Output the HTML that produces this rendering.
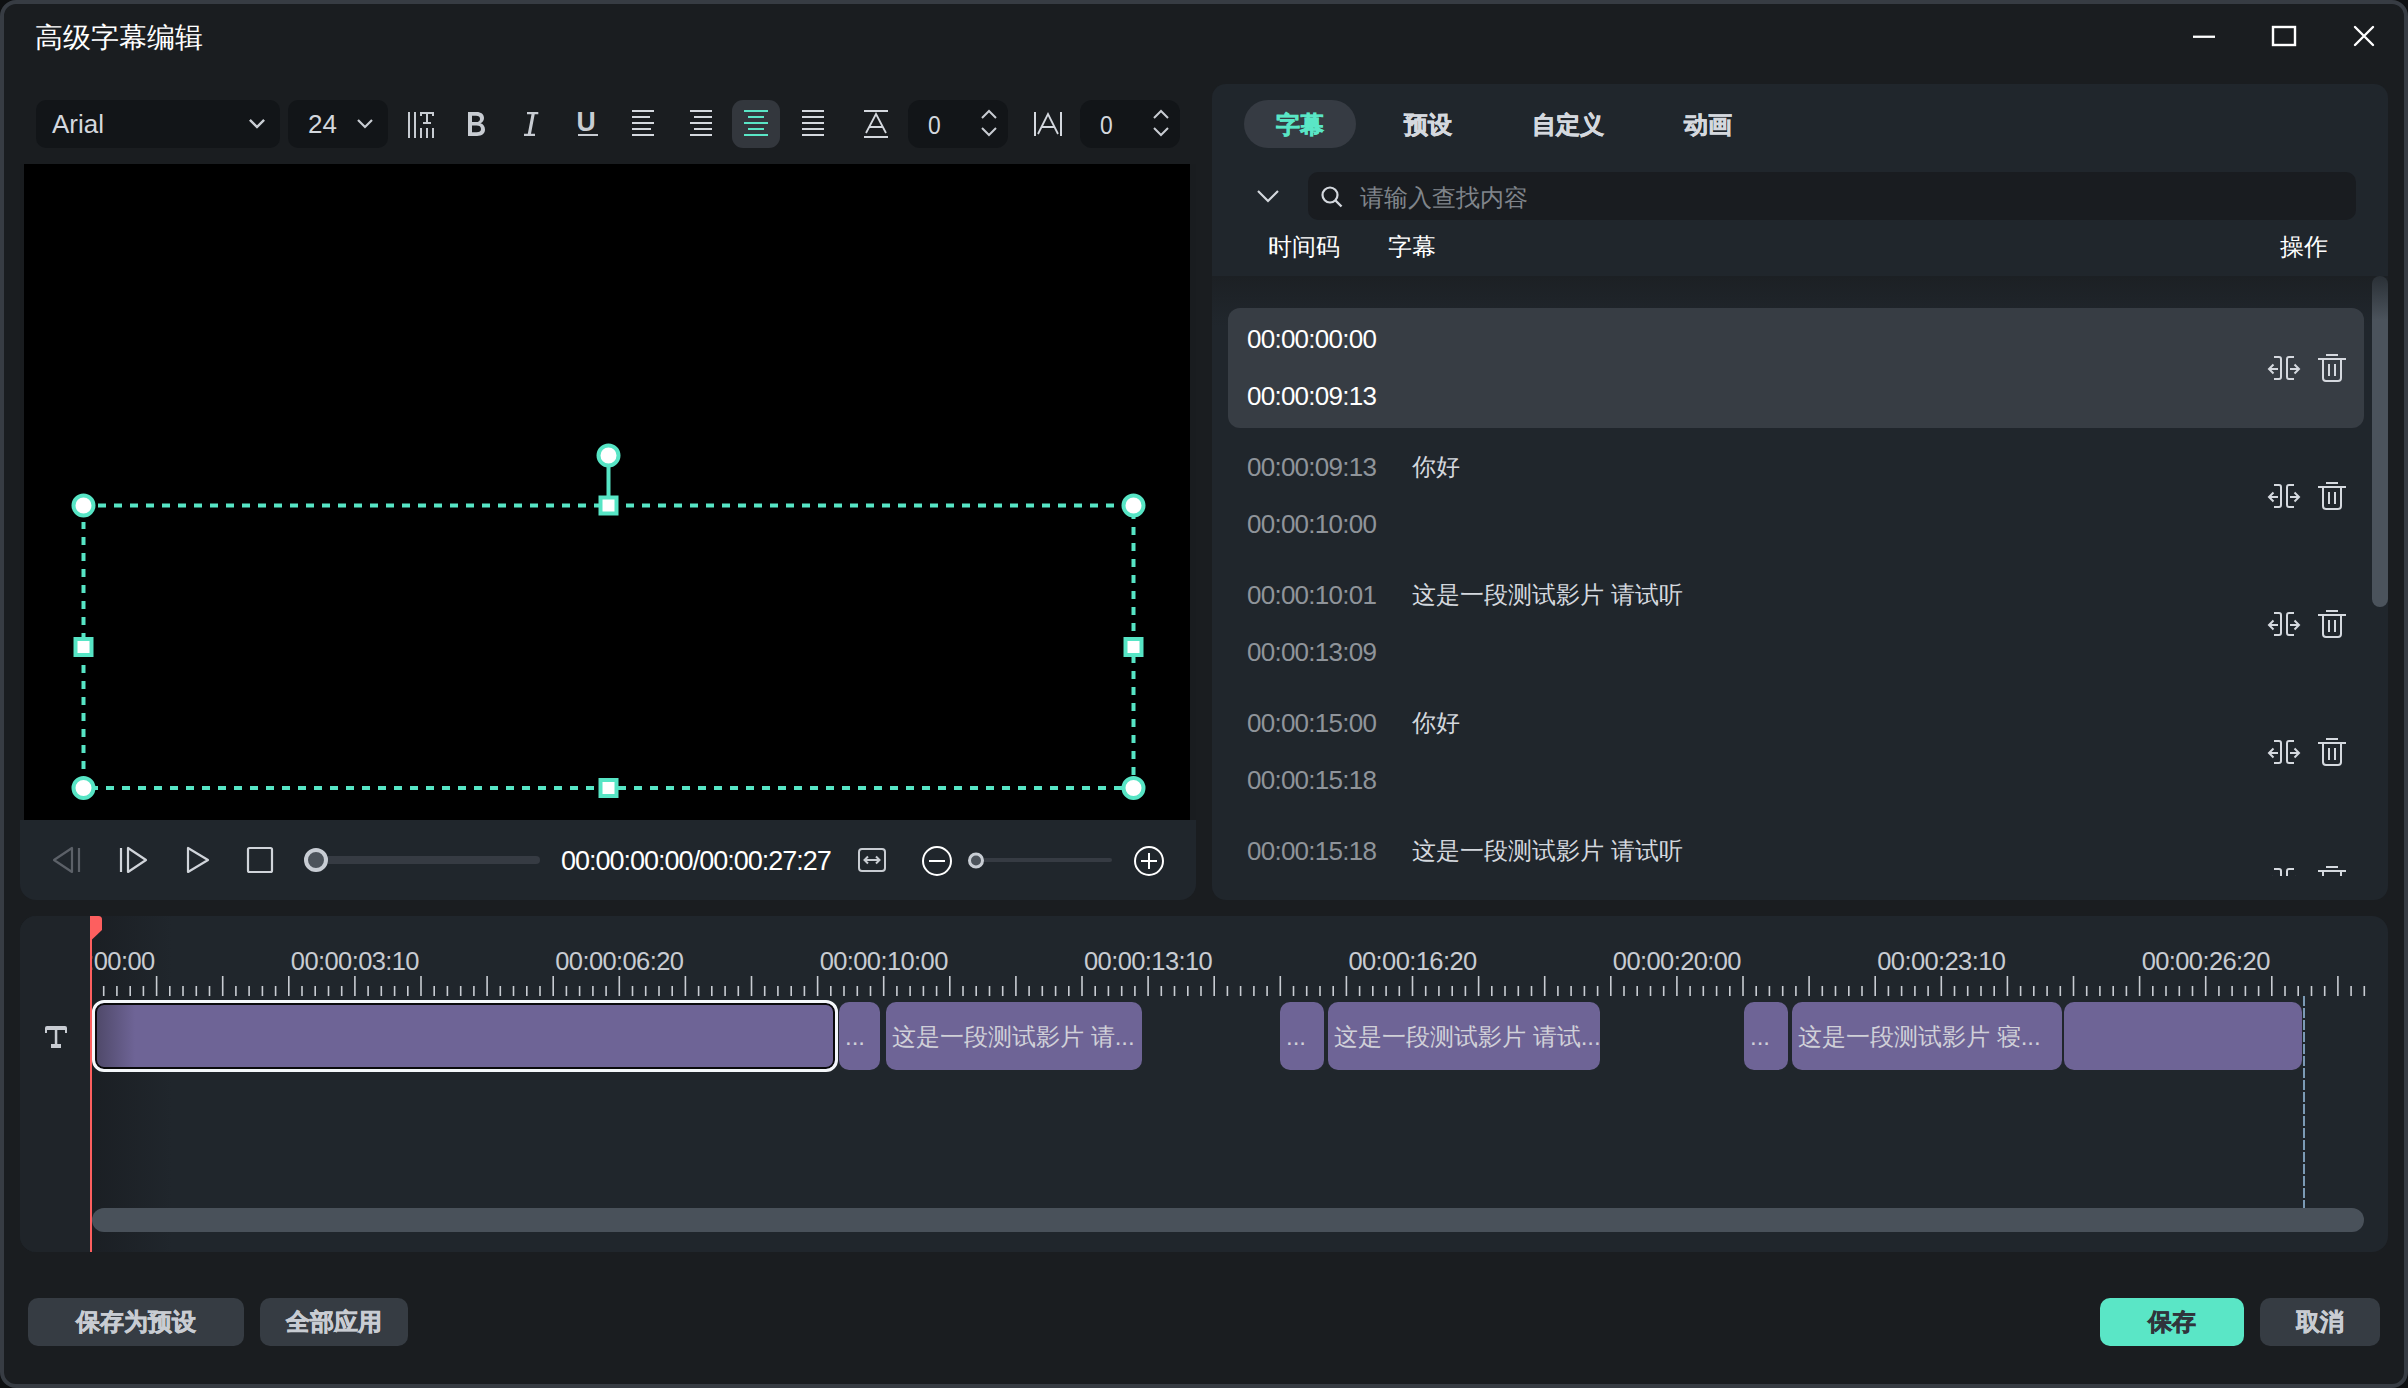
<!DOCTYPE html>
<html><head><meta charset="utf-8">
<style>
*{box-sizing:border-box;margin:0;padding:0}
html,body{width:2408px;height:1388px;overflow:hidden;background:#0e1012;font-family:"Liberation Sans",sans-serif}
.a{position:absolute}
#win{position:absolute;left:0;top:0;width:2408px;height:1388px;border:4px solid #373c43;border-radius:16px;background:#1a1d20;overflow:hidden}
.t{position:absolute;white-space:nowrap;line-height:1}
svg{position:absolute;overflow:visible}
.panel{position:absolute;background:#20262c}
.btn{position:absolute;background:#363c43;border-radius:10px}
.clip{position:absolute;background:#6e6496;border-radius:10px;top:1002px;height:68px;overflow:hidden}
</style></head><body>
<div id="win"></div>
<div id="root" class="a" style="left:0;top:0;width:2408px;height:1388px">

<!-- title -->
<div class="t" style="left:35px;top:24px;font-size:28px;color:#fff">高级字幕编辑</div>

<!-- window controls -->
<svg style="left:0;top:0" width="2408" height="60">
  <rect x="2193" y="35.6" width="22" height="2.3" fill="#fff"/>
  <rect x="2273" y="27" width="22" height="18" fill="none" stroke="#fff" stroke-width="2.4"/>
  <path d="M2355 27 L2373 45 M2373 27 L2355 45" stroke="#fff" stroke-width="2.4" stroke-linecap="round"/>
</svg>


<!-- toolbar -->
<div class="a" style="left:36px;top:100px;width:244px;height:48px;background:#121518;border-radius:10px"></div>
<div class="t" style="left:52px;top:111px;font-size:26px;color:#d4d8de">Arial</div>
<svg style="left:0;top:0" width="1200" height="160">
  <path d="M250 120 L257 127 L264 120" fill="none" stroke="#c8ccd2" stroke-width="2.2"/>
  <path d="M358 120 L365 127 L372 120" fill="none" stroke="#c8ccd2" stroke-width="2.2"/>
</svg>
<div class="a" style="left:288px;top:100px;width:100px;height:48px;background:#121518;border-radius:10px"></div>
<div class="t" style="left:308px;top:111px;font-size:26px;color:#d4d8de">24</div>
<svg style="left:0;top:0" width="1200" height="160">
  <path d="M250 120 L257 127 L264 120" fill="none" stroke="#c8ccd2" stroke-width="2.2"/>
  <path d="M358 120 L365 127 L372 120" fill="none" stroke="#c8ccd2" stroke-width="2.2"/>
  <!-- vertical text icon -->
  <g fill="#c8ccd2">
    <rect x="408" y="112" width="2" height="26"/>
    <rect x="414" y="112" width="2" height="26"/>
    <rect x="420" y="112" width="14" height="2"/>
    <rect x="420" y="112" width="2" height="4"/>
    <rect x="432" y="112" width="2" height="4"/>
    <rect x="426" y="112" width="2" height="12"/>
    <rect x="423" y="122" width="8" height="2"/>
    <rect x="420" y="128" width="2" height="10"/>
    <rect x="426" y="128" width="2" height="10"/>
    <rect x="432" y="128" width="2" height="10"/>
  </g>
  <!-- align left -->
  <g fill="#d4d8de">
    <rect x="632" y="110" width="22" height="2"/><rect x="632" y="116" width="18" height="2"/>
    <rect x="632" y="122" width="22" height="2"/><rect x="632" y="128" width="19" height="2"/>
    <rect x="632" y="134" width="22" height="2"/>
  </g>
  <!-- align right -->
  <g fill="#d4d8de">
    <rect x="690" y="110" width="22" height="2"/><rect x="694" y="116" width="18" height="2"/>
    <rect x="690" y="122" width="22" height="2"/><rect x="694" y="128" width="18" height="2"/>
    <rect x="690" y="134" width="22" height="2"/>
  </g>
  <rect x="732" y="100" width="48" height="48" rx="11" fill="#33373d"/>
  <g fill="#5ae6c6">
    <rect x="744" y="110" width="24" height="2"/><rect x="748" y="116" width="16" height="2"/>
    <rect x="744" y="122" width="24" height="2"/><rect x="748" y="128" width="16" height="2"/>
    <rect x="744" y="134" width="24" height="2"/>
  </g>
  <!-- justify -->
  <g fill="#d4d8de">
    <rect x="802" y="110" width="22" height="2"/><rect x="802" y="116" width="22" height="2"/>
    <rect x="802" y="122" width="22" height="2"/><rect x="802" y="128" width="22" height="2"/>
    <rect x="802" y="134" width="22" height="2"/>
  </g>
  <!-- line spacing -->
  <g fill="#d4d8de">
    <rect x="864" y="110" width="24" height="2"/><rect x="864" y="136" width="24" height="2"/>
  </g>
  <path d="M866 133 L876 114 L886 133 M869.5 127 L882.5 127" fill="none" stroke="#d4d8de" stroke-width="1.8"/>
  <rect x="908" y="100" width="100" height="48" rx="12" fill="#121518"/>
  <path d="M982 118 L989 111 L996 118 M982 128 L989 135 L996 128" fill="none" stroke="#c8ccd2" stroke-width="2"/>
  <!-- |A| -->
  <g fill="#d4d8de"><rect x="1034" y="112" width="2" height="24"/><rect x="1060" y="112" width="2" height="24"/></g>
  <path d="M1038 134 L1048 114 L1058 134 M1041.5 127 L1054.5 127" fill="none" stroke="#d4d8de" stroke-width="1.8"/>
  <rect x="1080" y="100" width="100" height="48" rx="12" fill="#121518"/>
  <path d="M1154 118 L1161 111 L1168 118 M1154 128 L1161 135 L1168 128" fill="none" stroke="#c8ccd2" stroke-width="2"/>
</svg>
<svg style="left:0;top:0" width="700" height="160">
  <path fill="#c8ccd2" fill-rule="evenodd" d="M468 112 H476.5 C481.2 112 484 114.3 484 118 C484 120.6 482.6 122.4 480.4 123.3 C483.2 124 485 126.3 485 129.6 C485 133.6 482 136 477 136 H468 Z M472 115.8 V122 H476 C478.6 122 480 120.9 480 118.9 C480 116.9 478.6 115.8 476 115.8 Z M472 125.6 V132.2 H476.6 C479.4 132.2 481 131 481 128.9 C481 126.8 479.4 125.6 476.6 125.6 Z"/>
  <path fill="#c8ccd2" d="M527 112 H538.3 V114.2 H534.7 L531 133.8 H535 V136 H524 V133.8 H527.8 L531.5 114.2 H527 Z"/>
</svg>
<div class="t" style="left:576px;top:108px;font-size:28px;font-weight:bold;color:#c8ccd2;transform:scaleX(0.95)">U</div>
<div class="a" style="left:578px;top:134px;width:20px;height:2px;background:#c8ccd2"></div>
<div class="t" style="left:928px;top:112px;font-size:26px;color:#d4d8de;transform:scaleX(0.88);transform-origin:0 0">0</div>
<div class="t" style="left:1100px;top:112px;font-size:26px;color:#d4d8de;transform:scaleX(0.88);transform-origin:0 0">0</div>

<!-- preview -->
<div class="a" style="left:20px;top:164px;width:1176px;height:656px;background:#191c1f"></div>
<div class="a" style="left:24px;top:164px;width:1166px;height:656px;background:#000"></div>
<svg style="left:0;top:0" width="1200" height="820">
  <g fill="none" stroke="#57e5c5" stroke-width="4">
    <path d="M98 505.5 H1120" stroke-dasharray="8 8"/>
    <path d="M90 788 H1126" stroke-dasharray="8 8"/>
    <path d="M83.5 522 V776" stroke-dasharray="8 8" stroke-dashoffset="1"/>
    <path d="M1133.5 511 V776" stroke-dasharray="8 8" stroke-dashoffset="0"/>
    <path d="M608.5 467 V496"/>
  </g>
  <g fill="#fff" stroke="#57e5c5" stroke-width="4">
    <circle cx="83.5" cy="505.5" r="10"/>
    <circle cx="1133.5" cy="505.5" r="10"/>
    <circle cx="83.5" cy="788" r="10"/>
    <circle cx="1133.5" cy="788" r="10"/>
    <circle cx="608.5" cy="455.5" r="10"/>
    <rect x="600.5" y="497.5" width="16" height="16"/>
    <rect x="600.5" y="780" width="16" height="16"/>
    <rect x="75.5" y="639" width="16" height="16"/>
    <rect x="1125.5" y="639" width="16" height="16"/>
  </g>
</svg>

<!-- controls bar -->
<div class="panel" style="left:20px;top:820px;width:1176px;height:80px;border-radius:0 0 16px 16px"></div>
<svg style="left:0;top:0" width="1200" height="900">
  <g fill="none" stroke-width="2.2" stroke-linejoin="round">
    <path d="M72 848 V872 L54 860 Z" stroke="#5c6168"/>
    <path d="M79 848 V872" stroke="#5c6168"/>
    <path d="M121 848 V872" stroke="#d0d4da"/>
    <path d="M128 848 V872 L146 860 Z" stroke="#d0d4da"/>
    <path d="M188 848 V872 L208 860 Z" stroke="#d0d4da"/>
    <rect x="248" y="848" width="24" height="24" rx="1.5" stroke="#d0d4da"/>
  </g>
  <rect x="316" y="856" width="224" height="8" rx="4" fill="#363b43"/>
  <circle cx="316" cy="860" r="10" fill="#4c535b" stroke="#c8cdd4" stroke-width="4"/>
  <rect x="859" y="849" width="26" height="22" rx="3" fill="none" stroke="#c8ccd2" stroke-width="2"/>
  <path d="M865 860 H879 M868 856.5 L864.5 860 L868 863.5 M876 856.5 L879.5 860 L876 863.5" fill="none" stroke="#c8ccd2" stroke-width="2"/>
  <circle cx="937" cy="861" r="14" fill="none" stroke="#fff" stroke-width="2"/>
  <path d="M929 861 H945" stroke="#fff" stroke-width="2"/>
  <rect x="976" y="858" width="136" height="4" rx="2" fill="#363b43"/>
  <circle cx="976" cy="860.5" r="6.5" fill="#4c535b" stroke="#c8cdd4" stroke-width="3"/>
  <circle cx="1149" cy="861" r="14" fill="none" stroke="#fff" stroke-width="2"/>
  <path d="M1141 861 H1157 M1149 853 V869" stroke="#fff" stroke-width="2"/>
</svg>
<div class="t" style="left:561px;top:848px;font-size:27px;color:#fff;letter-spacing:-1px">00:00:00:00/00:00:27:27</div>

<!-- right panel -->
<div class="panel" style="left:1212px;top:84px;width:1176px;height:816px;border-radius:14px;overflow:hidden">
  <div class="a" style="left:0;top:192px;width:1176px;height:50px;background:linear-gradient(#1c2024,#20262c)"></div>
</div>
<div class="a" style="left:1244px;top:100px;width:112px;height:48px;border-radius:24px;background:#363b43"></div>
<div class="t" style="left:1276px;top:113px;font-size:24px;font-weight:bold;color:#5ae6c6;-webkit-text-stroke:0.6px #5ae6c6">字幕</div>
<div class="t" style="left:1404px;top:113px;font-size:24px;font-weight:bold;color:#d4d8de;-webkit-text-stroke:0.6px #d4d8de">预设</div>
<div class="t" style="left:1532px;top:113px;font-size:24px;font-weight:bold;color:#d4d8de;-webkit-text-stroke:0.6px #d4d8de">自定义</div>
<div class="t" style="left:1684px;top:113px;font-size:24px;font-weight:bold;color:#d4d8de;-webkit-text-stroke:0.6px #d4d8de">动画</div>
<div class="a" style="left:1308px;top:172px;width:1048px;height:48px;border-radius:10px;background:#191c20"></div>
<svg style="left:0;top:0" width="2408" height="900">
  <path d="M1258 191 L1268 201 L1278 191" fill="none" stroke="#d4d8de" stroke-width="2.2"/>
  <circle cx="1330" cy="195" r="7.5" fill="none" stroke="#d4d8de" stroke-width="2.2"/>
  <path d="M1335.5 200.5 L1341.5 206.5" stroke="#d4d8de" stroke-width="2.4"/>
</svg>
<div class="t" style="left:1360px;top:186px;font-size:24px;color:#80858b">请输入查找内容</div>
<div class="t" style="left:1268px;top:235px;font-size:24px;color:#fff">时间码</div>
<div class="t" style="left:1388px;top:235px;font-size:24px;color:#fff">字幕</div>
<div class="t" style="left:2280px;top:235px;font-size:24px;color:#fff">操作</div>

<!-- list -->
<div class="a" style="left:1212px;top:276px;width:1176px;height:600px;overflow:hidden">
  <div class="a" style="left:0;top:0;width:1176px;height:44px;background:linear-gradient(#1c2024,#20262c)"></div>
  <div class="a" style="left:16px;top:32px;width:1136px;height:120px;border-radius:12px;background:#373d44"></div>
  <div class="a" style="left:1160px;top:0;width:16px;height:331px;border-radius:8px;background:linear-gradient(#2a3036 0px,#4b535c 44px,#4b535c)"></div>
</div>
<div class="t" style="left:1247px;top:326px;font-size:26px;color:#fff;letter-spacing:-0.75px">00:00:00:00</div>
<div class="t" style="left:1247px;top:383px;font-size:26px;color:#fff;letter-spacing:-0.75px">00:00:09:13</div>
<div class="t" style="left:1247px;top:454px;font-size:26px;color:#8f949a;letter-spacing:-0.75px">00:00:09:13</div>
<div class="t" style="left:1247px;top:511px;font-size:26px;color:#8f949a;letter-spacing:-0.75px">00:00:10:00</div>
<div class="t" style="left:1412px;top:455px;font-size:24px;color:#d4d8de">你好</div>
<div class="t" style="left:1247px;top:582px;font-size:26px;color:#8f949a;letter-spacing:-0.75px">00:00:10:01</div>
<div class="t" style="left:1247px;top:639px;font-size:26px;color:#8f949a;letter-spacing:-0.75px">00:00:13:09</div>
<div class="t" style="left:1412px;top:583px;font-size:24px;color:#d4d8de">这是一段测试影片 请试听</div>
<div class="t" style="left:1247px;top:710px;font-size:26px;color:#8f949a;letter-spacing:-0.75px">00:00:15:00</div>
<div class="t" style="left:1247px;top:767px;font-size:26px;color:#8f949a;letter-spacing:-0.75px">00:00:15:18</div>
<div class="t" style="left:1412px;top:711px;font-size:24px;color:#d4d8de">你好</div>
<div class="t" style="left:1247px;top:838px;font-size:26px;color:#8f949a;letter-spacing:-0.75px">00:00:15:18</div>
<div class="t" style="left:1412px;top:839px;font-size:24px;color:#d4d8de">这是一段测试影片 请试听</div>
<svg style="left:0;top:0" width="2408" height="900">
<defs>
 <clipPath id="lc"><rect x="1212" y="276" width="1176" height="600"/></clipPath>
 <g id="ico" fill="none" stroke="#d5d9df" stroke-width="2">
  <path d="M2274 357 H2279 Q2281 357 2281 359 V377 Q2281 379 2279 379 H2274"/>
  <path d="M2294 357 H2289 Q2287 357 2287 359 V377 Q2287 379 2289 379 H2294"/>
  <path d="M2269 369 H2278 M2273.5 364.5 L2269 369 L2273.5 373.5"/>
  <path d="M2290 369 H2299 M2294.5 364.5 L2299 369 L2294.5 373.5"/>
  <path d="M2326 355 H2338 M2318 359 H2346 M2323 359 V378 Q2323 381 2326 381 H2338 Q2341 381 2341 378 V359 M2329 364 V376 M2335 364 V376"/>
 </g>
</defs>
<g clip-path="url(#lc)">
<use href="#ico" y="0"/>
<use href="#ico" y="128"/>
<use href="#ico" y="256"/>
<use href="#ico" y="384"/>
<use href="#ico" y="512"/>
</g>
</svg>

<!-- timeline -->
<div class="panel" style="left:20px;top:916px;width:2368px;height:336px;border-radius:16px;overflow:hidden">
  <div class="a" style="left:0;top:0;width:72px;height:336px;background:#1f2429"></div>
</div>
<div class="a" style="left:92px;top:916px;width:2296px;height:336px;overflow:hidden">
  <div class="a" style="left:0;top:0;width:80px;height:336px;background:linear-gradient(90deg,#1b1f24,rgba(32,38,44,0))"></div>
<div class="t" style="left:-1.5px;top:33px;width:160px;margin-left:-80px;text-align:center;font-size:25.5px;color:#c8ccd2;letter-spacing:-0.6px">00:00:00:00</div>
<div class="t" style="left:262.9px;top:33px;width:160px;margin-left:-80px;text-align:center;font-size:25.5px;color:#c8ccd2;letter-spacing:-0.6px">00:00:03:10</div>
<div class="t" style="left:527.3px;top:33px;width:160px;margin-left:-80px;text-align:center;font-size:25.5px;color:#c8ccd2;letter-spacing:-0.6px">00:00:06:20</div>
<div class="t" style="left:791.7px;top:33px;width:160px;margin-left:-80px;text-align:center;font-size:25.5px;color:#c8ccd2;letter-spacing:-0.6px">00:00:10:00</div>
<div class="t" style="left:1056.1px;top:33px;width:160px;margin-left:-80px;text-align:center;font-size:25.5px;color:#c8ccd2;letter-spacing:-0.6px">00:00:13:10</div>
<div class="t" style="left:1320.5px;top:33px;width:160px;margin-left:-80px;text-align:center;font-size:25.5px;color:#c8ccd2;letter-spacing:-0.6px">00:00:16:20</div>
<div class="t" style="left:1584.9px;top:33px;width:160px;margin-left:-80px;text-align:center;font-size:25.5px;color:#c8ccd2;letter-spacing:-0.6px">00:00:20:00</div>
<div class="t" style="left:1849.3px;top:33px;width:160px;margin-left:-80px;text-align:center;font-size:25.5px;color:#c8ccd2;letter-spacing:-0.6px">00:00:23:10</div>
<div class="t" style="left:2113.7px;top:33px;width:160px;margin-left:-80px;text-align:center;font-size:25.5px;color:#c8ccd2;letter-spacing:-0.6px">00:00:26:20</div>
</div>
<svg style="left:0;top:0" width="2408" height="1260"><g fill="#c8ccd2"><rect x="102.9" y="986" width="1.6" height="10"/><rect x="116.1" y="986" width="1.6" height="10"/><rect x="129.4" y="986" width="1.6" height="10"/><rect x="142.6" y="986" width="1.6" height="10"/><rect x="155.8" y="976" width="1.6" height="20"/><rect x="169.0" y="986" width="1.6" height="10"/><rect x="182.2" y="986" width="1.6" height="10"/><rect x="195.5" y="986" width="1.6" height="10"/><rect x="208.7" y="986" width="1.6" height="10"/><rect x="221.9" y="976" width="1.6" height="20"/><rect x="235.1" y="986" width="1.6" height="10"/><rect x="248.3" y="986" width="1.6" height="10"/><rect x="261.6" y="986" width="1.6" height="10"/><rect x="274.8" y="986" width="1.6" height="10"/><rect x="288.0" y="976" width="1.6" height="20"/><rect x="301.2" y="986" width="1.6" height="10"/><rect x="314.4" y="986" width="1.6" height="10"/><rect x="327.7" y="986" width="1.6" height="10"/><rect x="340.9" y="986" width="1.6" height="10"/><rect x="354.1" y="976" width="1.6" height="20"/><rect x="367.3" y="986" width="1.6" height="10"/><rect x="380.5" y="986" width="1.6" height="10"/><rect x="393.8" y="986" width="1.6" height="10"/><rect x="407.0" y="986" width="1.6" height="10"/><rect x="420.2" y="976" width="1.6" height="20"/><rect x="433.4" y="986" width="1.6" height="10"/><rect x="446.6" y="986" width="1.6" height="10"/><rect x="459.9" y="986" width="1.6" height="10"/><rect x="473.1" y="986" width="1.6" height="10"/><rect x="486.3" y="976" width="1.6" height="20"/><rect x="499.5" y="986" width="1.6" height="10"/><rect x="512.7" y="986" width="1.6" height="10"/><rect x="526.0" y="986" width="1.6" height="10"/><rect x="539.2" y="986" width="1.6" height="10"/><rect x="552.4" y="976" width="1.6" height="20"/><rect x="565.6" y="986" width="1.6" height="10"/><rect x="578.8" y="986" width="1.6" height="10"/><rect x="592.1" y="986" width="1.6" height="10"/><rect x="605.3" y="986" width="1.6" height="10"/><rect x="618.5" y="976" width="1.6" height="20"/><rect x="631.7" y="986" width="1.6" height="10"/><rect x="644.9" y="986" width="1.6" height="10"/><rect x="658.2" y="986" width="1.6" height="10"/><rect x="671.4" y="986" width="1.6" height="10"/><rect x="684.6" y="976" width="1.6" height="20"/><rect x="697.8" y="986" width="1.6" height="10"/><rect x="711.0" y="986" width="1.6" height="10"/><rect x="724.3" y="986" width="1.6" height="10"/><rect x="737.5" y="986" width="1.6" height="10"/><rect x="750.7" y="976" width="1.6" height="20"/><rect x="763.9" y="986" width="1.6" height="10"/><rect x="777.1" y="986" width="1.6" height="10"/><rect x="790.4" y="986" width="1.6" height="10"/><rect x="803.6" y="986" width="1.6" height="10"/><rect x="816.8" y="976" width="1.6" height="20"/><rect x="830.0" y="986" width="1.6" height="10"/><rect x="843.2" y="986" width="1.6" height="10"/><rect x="856.5" y="986" width="1.6" height="10"/><rect x="869.7" y="986" width="1.6" height="10"/><rect x="882.9" y="976" width="1.6" height="20"/><rect x="896.1" y="986" width="1.6" height="10"/><rect x="909.3" y="986" width="1.6" height="10"/><rect x="922.6" y="986" width="1.6" height="10"/><rect x="935.8" y="986" width="1.6" height="10"/><rect x="949.0" y="976" width="1.6" height="20"/><rect x="962.2" y="986" width="1.6" height="10"/><rect x="975.4" y="986" width="1.6" height="10"/><rect x="988.7" y="986" width="1.6" height="10"/><rect x="1001.9" y="986" width="1.6" height="10"/><rect x="1015.1" y="976" width="1.6" height="20"/><rect x="1028.3" y="986" width="1.6" height="10"/><rect x="1041.5" y="986" width="1.6" height="10"/><rect x="1054.8" y="986" width="1.6" height="10"/><rect x="1068.0" y="986" width="1.6" height="10"/><rect x="1081.2" y="976" width="1.6" height="20"/><rect x="1094.4" y="986" width="1.6" height="10"/><rect x="1107.6" y="986" width="1.6" height="10"/><rect x="1120.9" y="986" width="1.6" height="10"/><rect x="1134.1" y="986" width="1.6" height="10"/><rect x="1147.3" y="976" width="1.6" height="20"/><rect x="1160.5" y="986" width="1.6" height="10"/><rect x="1173.7" y="986" width="1.6" height="10"/><rect x="1187.0" y="986" width="1.6" height="10"/><rect x="1200.2" y="986" width="1.6" height="10"/><rect x="1213.4" y="976" width="1.6" height="20"/><rect x="1226.6" y="986" width="1.6" height="10"/><rect x="1239.8" y="986" width="1.6" height="10"/><rect x="1253.1" y="986" width="1.6" height="10"/><rect x="1266.3" y="986" width="1.6" height="10"/><rect x="1279.5" y="976" width="1.6" height="20"/><rect x="1292.7" y="986" width="1.6" height="10"/><rect x="1305.9" y="986" width="1.6" height="10"/><rect x="1319.2" y="986" width="1.6" height="10"/><rect x="1332.4" y="986" width="1.6" height="10"/><rect x="1345.6" y="976" width="1.6" height="20"/><rect x="1358.8" y="986" width="1.6" height="10"/><rect x="1372.0" y="986" width="1.6" height="10"/><rect x="1385.3" y="986" width="1.6" height="10"/><rect x="1398.5" y="986" width="1.6" height="10"/><rect x="1411.7" y="976" width="1.6" height="20"/><rect x="1424.9" y="986" width="1.6" height="10"/><rect x="1438.1" y="986" width="1.6" height="10"/><rect x="1451.4" y="986" width="1.6" height="10"/><rect x="1464.6" y="986" width="1.6" height="10"/><rect x="1477.8" y="976" width="1.6" height="20"/><rect x="1491.0" y="986" width="1.6" height="10"/><rect x="1504.2" y="986" width="1.6" height="10"/><rect x="1517.5" y="986" width="1.6" height="10"/><rect x="1530.7" y="986" width="1.6" height="10"/><rect x="1543.9" y="976" width="1.6" height="20"/><rect x="1557.1" y="986" width="1.6" height="10"/><rect x="1570.3" y="986" width="1.6" height="10"/><rect x="1583.6" y="986" width="1.6" height="10"/><rect x="1596.8" y="986" width="1.6" height="10"/><rect x="1610.0" y="976" width="1.6" height="20"/><rect x="1623.2" y="986" width="1.6" height="10"/><rect x="1636.4" y="986" width="1.6" height="10"/><rect x="1649.7" y="986" width="1.6" height="10"/><rect x="1662.9" y="986" width="1.6" height="10"/><rect x="1676.1" y="976" width="1.6" height="20"/><rect x="1689.3" y="986" width="1.6" height="10"/><rect x="1702.5" y="986" width="1.6" height="10"/><rect x="1715.8" y="986" width="1.6" height="10"/><rect x="1729.0" y="986" width="1.6" height="10"/><rect x="1742.2" y="976" width="1.6" height="20"/><rect x="1755.4" y="986" width="1.6" height="10"/><rect x="1768.6" y="986" width="1.6" height="10"/><rect x="1781.9" y="986" width="1.6" height="10"/><rect x="1795.1" y="986" width="1.6" height="10"/><rect x="1808.3" y="976" width="1.6" height="20"/><rect x="1821.5" y="986" width="1.6" height="10"/><rect x="1834.7" y="986" width="1.6" height="10"/><rect x="1848.0" y="986" width="1.6" height="10"/><rect x="1861.2" y="986" width="1.6" height="10"/><rect x="1874.4" y="976" width="1.6" height="20"/><rect x="1887.6" y="986" width="1.6" height="10"/><rect x="1900.8" y="986" width="1.6" height="10"/><rect x="1914.1" y="986" width="1.6" height="10"/><rect x="1927.3" y="986" width="1.6" height="10"/><rect x="1940.5" y="976" width="1.6" height="20"/><rect x="1953.7" y="986" width="1.6" height="10"/><rect x="1966.9" y="986" width="1.6" height="10"/><rect x="1980.2" y="986" width="1.6" height="10"/><rect x="1993.4" y="986" width="1.6" height="10"/><rect x="2006.6" y="976" width="1.6" height="20"/><rect x="2019.8" y="986" width="1.6" height="10"/><rect x="2033.0" y="986" width="1.6" height="10"/><rect x="2046.3" y="986" width="1.6" height="10"/><rect x="2059.5" y="986" width="1.6" height="10"/><rect x="2072.7" y="976" width="1.6" height="20"/><rect x="2085.9" y="986" width="1.6" height="10"/><rect x="2099.1" y="986" width="1.6" height="10"/><rect x="2112.4" y="986" width="1.6" height="10"/><rect x="2125.6" y="986" width="1.6" height="10"/><rect x="2138.8" y="976" width="1.6" height="20"/><rect x="2152.0" y="986" width="1.6" height="10"/><rect x="2165.2" y="986" width="1.6" height="10"/><rect x="2178.5" y="986" width="1.6" height="10"/><rect x="2191.7" y="986" width="1.6" height="10"/><rect x="2204.9" y="976" width="1.6" height="20"/><rect x="2218.1" y="986" width="1.6" height="10"/><rect x="2231.3" y="986" width="1.6" height="10"/><rect x="2244.6" y="986" width="1.6" height="10"/><rect x="2257.8" y="986" width="1.6" height="10"/><rect x="2271.0" y="976" width="1.6" height="20"/><rect x="2284.2" y="986" width="1.6" height="10"/><rect x="2297.4" y="986" width="1.6" height="10"/><rect x="2310.7" y="986" width="1.6" height="10"/><rect x="2323.9" y="986" width="1.6" height="10"/><rect x="2337.1" y="976" width="1.6" height="20"/><rect x="2350.3" y="986" width="1.6" height="10"/><rect x="2363.5" y="986" width="1.6" height="10"/></g>
  <path d="M2304 996 V1208" stroke="#7b9ab5" stroke-width="2" stroke-dasharray="10 2"/>
  <rect x="92" y="1208" width="2272" height="24" rx="12" fill="#49515a"/>
  <path fill="#c8ccd2" d="M47 1026 H65 Q67 1026 67 1028 V1033 H65 V1030 H57.3 V1044 H61 V1048 H51 V1044 H54.8 V1030 H47 V1033 H45 V1028 Q45 1026 47 1026 Z"/>
</svg>
<div class="clip" style="left:92px;top:1000px;width:746px;height:72px;border:3px solid #f4f7fa;box-shadow:inset 0 0 0 2px #0a0a0c;border-radius:12px;background:linear-gradient(90deg,#4e4868 0px,#6e6496 40px)"></div>
<div class="clip" style="left:839px;width:41px"><div class="t" style="left:6px;top:23px;font-size:24px;color:#d0d0d8">...</div></div>
<div class="clip" style="left:886px;width:256px"><div class="t" style="left:6px;top:23px;font-size:24px;color:#d0d0d8">这是一段测试影片 请...</div></div>
<div class="clip" style="left:1280px;width:44px"><div class="t" style="left:6px;top:23px;font-size:24px;color:#d0d0d8">...</div></div>
<div class="clip" style="left:1328px;width:272px"><div class="t" style="left:6px;top:23px;font-size:24px;color:#d0d0d8">这是一段测试影片 请试...</div></div>
<div class="clip" style="left:1744px;width:44px"><div class="t" style="left:6px;top:23px;font-size:24px;color:#d0d0d8">...</div></div>
<div class="clip" style="left:1792px;width:270px"><div class="t" style="left:6px;top:23px;font-size:24px;color:#d0d0d8">这是一段测试影片 寝...</div></div>
<div class="clip" style="left:2064px;width:238px"></div>
<!-- playhead -->
<div class="a" style="left:90px;top:916px;width:2px;height:336px;background:#fd5f5f"></div>
<svg style="left:0;top:0" width="200" height="960">
  <path d="M90 916 H98.5 Q102 916 102 919.5 V930 L92 939.5 H90 Z" fill="#fd5f5f"/>
</svg>

<!-- bottom buttons -->
<div class="btn" style="left:28px;top:1298px;width:216px;height:48px"></div>
<div class="t" style="left:76px;top:1310px;font-size:24px;font-weight:bold;color:#c8ccd2;-webkit-text-stroke:0.6px #c8ccd2">保存为预设</div>
<div class="btn" style="left:260px;top:1298px;width:148px;height:48px"></div>
<div class="t" style="left:286px;top:1310px;font-size:24px;font-weight:bold;color:#c8ccd2;-webkit-text-stroke:0.6px #c8ccd2">全部应用</div>
<div class="btn" style="left:2100px;top:1298px;width:144px;height:48px;background:#5ae6c6"></div>
<div class="t" style="left:2148px;top:1310px;font-size:24px;font-weight:bold;color:#30343b;-webkit-text-stroke:0.6px #30343b">保存</div>
<div class="btn" style="left:2260px;top:1298px;width:120px;height:48px"></div>
<div class="t" style="left:2296px;top:1310px;font-size:24px;font-weight:bold;color:#c8ccd2;-webkit-text-stroke:0.6px #c8ccd2">取消</div>

</div>
</body></html>
